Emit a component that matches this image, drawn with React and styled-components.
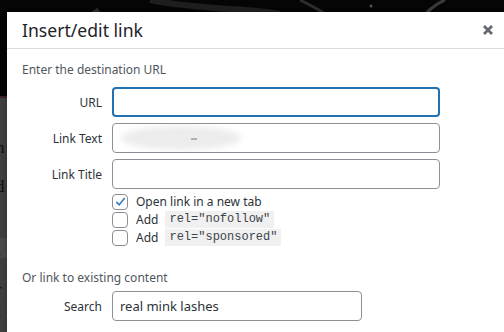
import React from 'react';
import styled, { createGlobalStyle } from 'styled-components';

const GlobalStyle = createGlobalStyle`
  html, body {
    margin: 0;
    padding: 0;
    width: 504px;
    height: 332px;
    overflow: hidden;
    background: #404040;
  }
`;

const Page = styled.div`
  position: relative;
  width: 504px;
  height: 332px;
  overflow: hidden;
  background: #404040;
`;

const Hero = styled.div`
  height: 96px;
  background: #050505;
  border-bottom: 2px solid #3a2226;
  svg {
    display: block;
  }
`;

const Article = styled.div`
  padding-top: 40px;
  font-family: 'Liberation Serif', serif;
  font-size: 17px;
  line-height: 20px;
`;

const ArticleLine = styled.div`
  padding-left: 0;
  margin-left: -4px;
  margin-top: ${({ gap }) => gap || 0}px;
  color: ${({ link }) => (link ? '#1e2a6a' : '#111')};
  text-decoration: ${({ link }) => (link ? 'underline' : 'none')};
  background: ${({ link }) => (link ? '#4a4a4a' : 'transparent')};
  white-space: nowrap;
`;

const Dialog = styled.div`
  position: absolute;
  top: 12px;
  left: 7px;
  width: 520px;
  height: 340px;
  background: #fff;
  font-family: 'Noto Sans', 'Open Sans', sans-serif;
  box-shadow: 0 3px 6px rgba(0, 0, 0, 0.3);
`;

const Header = styled.div`
  display: flex;
  align-items: center;
  justify-content: space-between;
  height: 36px;
  border-bottom: 1px solid #dcdcde;
  padding: 0 0 0 15px;
`;

const Title = styled.h1`
  margin: 0;
  font-size: 17.6px;
  font-weight: 400;
  color: #1d2327;
`;

const Close = styled.button`
  border: 0;
  background: none;
  padding: 0;
  margin-right: 31px;
  width: 16px;
  height: 16px;
  display: flex;
  align-items: center;
  justify-content: center;
  cursor: pointer;
`;

const Body = styled.div`
  padding: 13px 15px 0 15px;
`;

const SectionTitle = styled.div`
  font-size: 12px;
  color: #50575e;
  line-height: 16px;
  margin-bottom: ${({ bottom }) => bottom || 9}px;
  margin-top: ${({ top }) => top || 0}px;
`;

const FieldRow = styled.div`
  display: grid;
  grid-template-columns: 80px ${({ w }) => w}px;
  column-gap: 10px;
  align-items: center;
  margin-bottom: 6px;
`;

const Label = styled.label`
  text-align: right;
  font-size: 12px;
  color: #2c3338;
`;

const InputBox = styled.div`
  position: relative;
  box-sizing: border-box;
  height: 30px;
  border-radius: 4px;
  border: ${({ focus }) => (focus ? '2px solid #2271b1' : '1px solid #8c8f94')};
  background: #fff;
  display: flex;
  align-items: center;
  padding: 0 7px;
  font-size: 13px;
  color: #2c3338;
  overflow: hidden;
`;

const Blur = styled.div`
  position: absolute;
  left: 8px;
  top: 2px;
  width: 120px;
  height: 24px;
  border-radius: 50%;
  background: #ececec;
  filter: blur(3px);
`;

const Dot = styled.div`
  position: absolute;
  left: 78px;
  top: 14px;
  width: 6px;
  height: 2px;
  background: #b0b0b0;
  filter: blur(0.5px);
`;

const Options = styled.div`
  display: flex;
  flex-direction: column;
  gap: 1px;
  padding-left: 90px;
  margin-top: -2px;
`;

const Option = styled.div`
  display: flex;
  align-items: center;
  gap: 8px;
  height: 17px;
  font-size: 12px;
  color: #2c3338;
`;

const Box = styled.span`
  box-sizing: border-box;
  width: 16px;
  height: 16px;
  border: 1px solid #8c8f94;
  border-radius: 4px;
  display: flex;
  align-items: center;
  justify-content: center;
  flex: none;
`;

const Code = styled.code`
  font-family: 'Liberation Mono', 'DejaVu Sans Mono', monospace;
  font-size: 12px;
  background: #f0f0f1;
  color: #3c434a;
  padding: 1px 4px;
  margin-left: -1px;
  line-height: 15px;
`;

const Check = () => (
  <svg width="13" height="13" viewBox="0 0 20 20">
    <path d="M3.5 10.5 L8 15 L16.5 4.5" fill="none" stroke="#3582c4" strokeWidth="2.6" />
  </svg>
);

export default function App() {
  return (
    <>
      <GlobalStyle />
      <Page>
        <Hero>
          <svg width="504" height="96" viewBox="0 0 504 96">
            <path d="M20 96 C40 60 70 30 100 12" stroke="#2a2a2a" strokeWidth="10" fill="none" />
            <path d="M150 0 C200 10 250 8 280 14" stroke="#1e1e1e" strokeWidth="6" fill="none" />
            <path d="M300 0 C320 10 340 20 350 40" stroke="#2b2b2b" strokeWidth="3" fill="none" />
            <path d="M420 20 C430 8 440 2 445 0" stroke="#3a3a3a" strokeWidth="3" fill="none" />
            <circle cx="371" cy="6" r="1.5" fill="#555" />
          </svg>
        </Hero>
        <Article>
          <ArticleLine>n</ArticleLine>
          <ArticleLine gap={19}>d</ArticleLine>
          <ArticleLine gap={41} link>i</ArticleLine>
          <ArticleLine gap={22}>r</ArticleLine>
          <ArticleLine gap={2}>t</ArticleLine>
        </Article>
        <Dialog>
          <Header>
            <Title>Insert/edit link</Title>
            <Close aria-label="Close">
              <svg width="12" height="12" viewBox="0 0 12 12">
                <path d="M2 2 L10 10 M10 2 L2 10" stroke="#646970" strokeWidth="2.8" />
              </svg>
            </Close>
          </Header>
          <Body>
            <SectionTitle>Enter the destination URL</SectionTitle>
            <FieldRow w={328}>
              <Label>URL</Label>
              <InputBox focus />
            </FieldRow>
            <FieldRow w={328}>
              <Label>Link Text</Label>
              <InputBox>
                <Blur />
                <Dot />
              </InputBox>
            </FieldRow>
            <FieldRow w={328}>
              <Label>Link Title</Label>
              <InputBox />
            </FieldRow>
            <Options>
              <Option>
                <Box>
                  <Check />
                </Box>
                Open link in a new tab
              </Option>
              <Option>
                <Box />
                Add <Code>rel="nofollow"</Code>
              </Option>
              <Option>
                <Box />
                Add <Code>rel="sponsored"</Code>
              </Option>
            </Options>
            <SectionTitle top={24} bottom={5}>
              Or link to existing content
            </SectionTitle>
            <FieldRow w={250}>
              <Label>Search</Label>
              <InputBox>real mink lashes</InputBox>
            </FieldRow>
          </Body>
        </Dialog>
      </Page>
    </>
  );
}
